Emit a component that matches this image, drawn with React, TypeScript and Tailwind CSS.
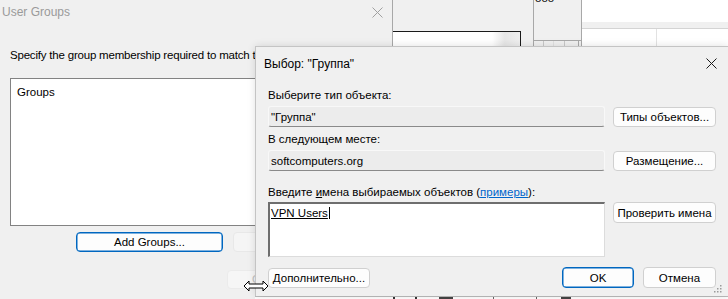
import React from 'react';

const font = "font-['Liberation_Sans',Arial,sans-serif] text-[11.5px] leading-[16px] text-black";

function Btn({ children, w, h = 'h-[20px]', focus = false }: { children: React.ReactNode; w: string; h?: string; focus?: boolean }) {
  return (
    <div
      className={`${w} ${h} flex items-center justify-center rounded-[4px] bg-[#fdfdfd] border ${
        focus ? 'border-[#0067c0] shadow-[inset_0_0_0_0.5px_#0067c0]' : 'border-[#d0d0d0]'
      }`}
    >
      {children}
    </div>
  );
}

function CloseX({ color }: { color: string }) {
  return (
    <svg width="11" height="11" viewBox="0 0 11 11">
      <path d="M0.5 0.5 L10.5 10.5 M10.5 0.5 L0.5 10.5" stroke={color} strokeWidth="1" />
    </svg>
  );
}

function ReadField({ text }: { text: string }) {
  return (
    <div className="w-[337px] h-[21px] flex items-center pl-[2px] bg-[#ececec] border border-[#f8f8f8] border-b-[#8a8a8a] rounded-[3px]">
      {text}
    </div>
  );
}

function Backdrop() {
  return (
    <div className="absolute left-[392px] top-0 right-0 h-[46px] flex">
      <div className="w-[141px] h-full border-l border-[#a8a8a8] bg-[#f0f0f0] flex flex-col">
        <div className="h-[31px]" />
        <div className="w-[128px] h-[15px] border-t border-r border-[#1a1a1a] bg-[linear-gradient(90deg,#ffffff_0%,#ffffff_78%,#e6e6e6_88%,#efefef_100%)]" />
      </div>
      <div className="w-[48px] h-full border-l border-[#a8a8a8] bg-[#f0f0f0] flex flex-col overflow-hidden">
        <div className="h-[4px] overflow-hidden">
          <div className="-mt-[10px] pl-[1px] leading-[16px]">ooo</div>
        </div>
        <div className="h-[36px]" />
        <div className="flex-1 flex border-t border-[#a8a8a8]">
          <div className="w-[10px] border-r border-[#c8c8c8]" />
          <div className="w-[10px] border-r border-[#e0e0e0]" />
          <div className="w-[11px] border-r border-[#c8c8c8]" />
          <div className="w-[14px] border-r border-[#a8a8a8]" />
        </div>
      </div>
      <div className="flex-1 h-full border-l border-[#a8a8a8] flex flex-col">
        <div className="h-[22px] bg-white" />
        <div className="h-[7px] bg-[#f0f0f0] border-b border-[#d4d4d4]" />
        <div className="flex-1 flex bg-white">
          <div className="w-[75px] border-r border-[#e2e2e2]" />
        </div>
      </div>
    </div>
  );
}

function UserGroups() {
  return (
    <div className="absolute left-0 top-0 w-[392px] h-[299px] bg-[#f0f0f0] flex flex-col">
      <div className="h-[24px] flex items-center justify-between pl-[2px] pr-[9px]">
        <span className="text-[12px] text-[#9a9a9a]">User Groups</span>
        <CloseX color="#a0a0a0" />
      </div>
      <div className="pl-[10px] mt-[23px] whitespace-nowrap tracking-[-0.2px]">
        Specify the group membership required to match this policy
      </div>
      <div className="ml-[10px] mt-[15px] w-[320px] h-[148px] bg-white border border-[#828282] pl-[6px] pt-[5px]">Groups</div>
      <div className="flex mt-[6px] pl-[76px] gap-[10px]">
        <Btn w="w-[147px]" focus>
          <span className="-mt-[1px]">Add Groups...</span>
        </Btn>
        <div className="w-[147px] h-[20px] rounded-[4px] bg-[#f5f5f5] border border-[#e8e8e8]" />
      </div>
      <div className="flex mt-[18px] pl-[227px]">
        <div className="w-[80px] h-[19px] rounded-[4px] bg-[#f6f6f6] border border-[#ebebeb] pl-[24px] text-[#c0c0c0] leading-[17px]">OK</div>
      </div>
    </div>
  );
}

function PickerDialog() {
  return (
    <div className="absolute left-[255px] top-[46px] w-[473px] h-[250px] bg-[#f0f0f0] border-l border-t border-[#c4c4c4] shadow-[0_0_8px_rgba(0,0,0,0.12)] flex flex-col">
      <div className="h-[33px] flex items-center justify-between pl-[8px] pr-[11px]">
        <span className="text-[12px] mt-[1px]">Выбор: "Группа"</span>
        <CloseX color="#1a1a1a" />
      </div>
      <div className="px-[12px] flex flex-col">
        <div className="mt-[7px]">Выберите тип объекта:</div>
        <div className="mt-[3px] flex gap-[8px]">
          <ReadField text={'"Группа"'} />
          <div className="mt-[1px]">
            <Btn w="w-[103px]">Типы объектов...</Btn>
          </div>
        </div>
        <div className="mt-[4px]">В следующем месте:</div>
        <div className="mt-[3px] flex gap-[8px]">
          <ReadField text="softcomputers.org" />
          <div className="mt-[1px]">
            <Btn w="w-[103px]">Размещение...</Btn>
          </div>
        </div>
        <div className="mt-[13px]">
          Введите <span className="underline">и</span>мена выбираемых объектов (
          <span className="text-[#0066cc] underline">примеры</span>):
        </div>
        <div className="mt-[2px] flex gap-[8px]">
          <div className="w-[337px] h-[55px] bg-white border-t-2 border-l-2 border-[#6e6e6e] border-r border-b border-r-[#dcdcdc] border-b-[#dcdcdc] pl-[1px] pt-[1px]">
            <span className="underline border-r border-black pr-[1px]">VPN Users</span>
          </div>
          <Btn w="w-[103px]" h="h-[21px]">Проверить имена</Btn>
        </div>
        <div className="mt-[10px] flex items-center">
          <Btn w="w-[102px]">Дополнительно...</Btn>
          <div className="flex-1" />
          <Btn w="w-[72px]" h="h-[21px]" focus>OK</Btn>
          <div className="w-[9px]" />
          <Btn w="w-[73px]" h="h-[21px]">Отмена</Btn>
        </div>
      </div>
      <svg className="absolute right-[6px] bottom-[3px]" width="10" height="10" viewBox="0 0 10 10">
        {[
          [8, 2],
          [5, 5],
          [8, 5],
          [2, 8],
          [5, 8],
          [8, 8],
        ].map(([x, y], i) => (
          <rect key={i} x={x} y={y} width="1.5" height="1.5" fill="#9a9a9a" />
        ))}
      </svg>
    </div>
  );
}

function BottomStrip() {
  return (
    <div className="absolute left-[255px] top-[296px] right-0 h-[3px] bg-white border-t border-[#bdbdbd] flex">
      <div className="w-[138px]" />
      <div className="w-[2px] bg-[#333]" />
      <div className="w-[20px]" />
      <div className="w-[2px] bg-[#333]" />
      <div className="w-[22px]" />
      <div className="w-[14px] bg-[#444]" />
      <div className="w-[40px]" />
      <div className="w-[1px] bg-[#666]" />
      <div className="w-[42px]" />
      <div className="w-[1px] bg-[#666]" />
      <div className="w-[24px]" />
      <div className="w-[10px] bg-[#444]" />
    </div>
  );
}

function ResizeCursor() {
  return (
    <svg className="absolute left-[243px] top-[280px]" width="26" height="12" viewBox="0 0 26 12">
      <path
        d="M1 6 L6 1 L6 4 L20 4 L20 1 L25 6 L20 11 L20 8 L6 8 L6 11 Z"
        fill="#ffffff"
        stroke="#000000"
        strokeWidth="1"
        strokeLinejoin="miter"
      />
    </svg>
  );
}

export default function App() {
  return (
    <div className={`relative w-[728px] h-[299px] overflow-hidden bg-[#f0f0f0] ${font}`}>
      <Backdrop />
      <UserGroups />
      <BottomStrip />
      <PickerDialog />
      <ResizeCursor />
    </div>
  );
}
